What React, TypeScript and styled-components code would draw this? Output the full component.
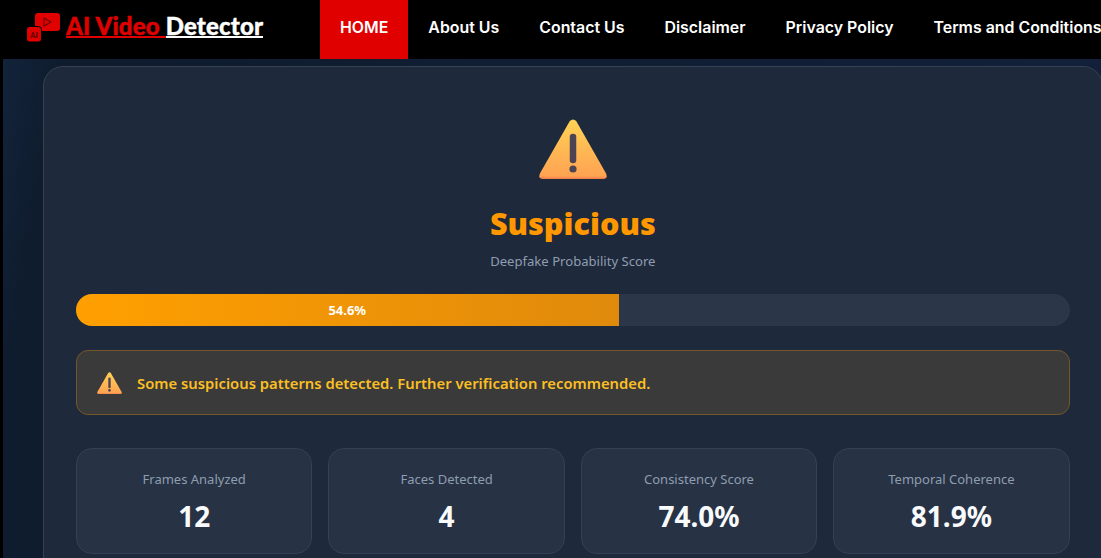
import React from "react";
import styled, { createGlobalStyle } from "styled-components";

const Global = createGlobalStyle`
  html, body { margin: 0; padding: 0; height: 558px; overflow: hidden; background: #000; }
  * { box-sizing: border-box; }
  #root { height: 558px; overflow: hidden; }
`;
const bodyFont = `"Noto Sans", "Open Sans", sans-serif`;

const Header = styled.header`
  display: flex; height: 59px; background: #000; align-items: stretch; overflow: hidden;
`;
const Brand = styled.div`
  flex: none; width: 320px; display: flex; align-items: flex-start; padding: 13px 0 0 27px; gap: 6px;
`;
const BrandText = styled.div`
  display: flex; font-family: Lato, sans-serif; font-weight: 900; font-size: 24px; line-height: 20px;
  letter-spacing: 0.17px; white-space: pre; margin-top: 3px;
`;
const BrandPart = styled.span<{ $c: string }>`
  color: ${p => p.$c}; border-bottom: 2px solid ${p => p.$c}; -webkit-text-stroke: 0.4px ${p => p.$c};
`;
const Nav = styled.nav`display: flex; flex: none; white-space: nowrap;`;
const NavItem = styled.a<{ $active?: boolean }>`
  display: flex; align-items: center; padding: 0 20px 4px; height: 59px;
  color: #fff; font-family: Inter, sans-serif; font-weight: 600; font-size: 15.9px;
  background: ${p => (p.$active ? "#e00000" : "transparent")};
`;
const Page = styled.main`
  margin-left: 3px; height: 499px; padding: 7px 0 0 40px; overflow: hidden;
  background: linear-gradient(100deg, #12233a 0%, #0f1c2e 5%, #12203a 100%);
`;
const Card = styled.section`
  width: 1059.6px; height: 600px; padding: 32px; border: 1px solid #364254; border-radius: 20px;
  background: #1e293b; font-family: ${bodyFont};
`;
const Top = styled.div`display: flex; flex-direction: column; align-items: center; padding-top: 20px;`;
const Title = styled.h1`
  margin: 24px 0 0; font-family: ${bodyFont}; font-weight: 900; font-size: 30.6px; line-height: 40px; color: #ff9800;
`;
const Sub = styled.p`margin: 9px 0 0; font-size: 13.1px; line-height: 18px; color: #8f9db0;`;
const Track = styled.div`
  margin-top: 24px; height: 32px; border-radius: 16px; overflow: hidden; background: #2b3748;
`;
const Fill = styled.div`
  height: 100%; display: flex; align-items: center; justify-content: center;
  background: linear-gradient(90deg, #ff9f00, #e08a0c);
  color: #fff; font-weight: 700; font-size: 13px;
`;
const Alert = styled.div`
  margin-top: 24px; height: 65px; display: flex; align-items: center; gap: 15px; padding: 1px 20px 0;
  border: 1px solid #75562a; border-radius: 12px; background: #3a3a3a;
  color: #fbbf24; font-weight: 600; font-size: 14.8px;
`;
const Stats = styled.div`margin-top: 33px; display: grid; grid-template-columns: repeat(4, 1fr); gap: 16px;`;
const Stat = styled.div`
  height: 106px; display: flex; flex-direction: column; align-items: center; padding-top: 21px;
  background: #273244; border: 1px solid #344154; border-radius: 16px;
`;
const StatLabel = styled.div`font-size: 13px; line-height: 18px; color: #8f9db0;`;
const StatValue = styled.div`margin-top: 9px; font-size: 28px; font-weight: 700; line-height: 38px; color: #f8fafc;`;

const Warn = ({ w, h, id }: { w: number; h: number; id: string }) => (
  <svg width={w} height={h} viewBox="0 0 68 60" aria-hidden style={{ flex: "none" }}>
    <defs>
      <linearGradient id={id} x1="0" y1="0" x2="0" y2="1">
        <stop offset="0" stopColor="#ffd255" />
        <stop offset="0.95" stopColor="#ffa352" />
        <stop offset="1" stopColor="#f07a4a" />
      </linearGradient>
    </defs>
    <path d="M30.8 2 Q34 -1 37.2 2 L66.8 54 Q69.5 60 64 60 L4 60 Q-1.5 60 1.2 54Z" fill={`url(#${id})`} />
    <path d="M34 18v23" stroke="#4d4453" strokeWidth="6.5" strokeLinecap="round" />
    <circle cx="34" cy="50" r="3.6" fill="#4d4453" />
  </svg>
);

const Logo = () => (
  <svg width="33" height="29" viewBox="0 0 33 29" aria-hidden style={{ flex: "none" }}>
    <rect x="8" y="0" width="25" height="18" rx="3" fill="#e00000" />
    <path d="M17 5 L24 9 L17 13Z" fill="none" stroke="#6b0000" strokeWidth="1.1" />
    <rect x="-0.5" y="13.5" width="15" height="15.5" rx="3" fill="#e00000" stroke="#000" strokeWidth="1" />
    <text x="7" y="24.5" textAnchor="middle" fontFamily="Lato, sans-serif" fontWeight="900" fontSize="7.5" fill="#5a0000">AI</text>
  </svg>
);

const stats = [
  ["Frames Analyzed", "12"],
  ["Faces Detected", "4"],
  ["Consistency Score", "74.0%"],
  ["Temporal Coherence", "81.9%"],
];
const nav = ["HOME", "About Us", "Contact Us", "Disclaimer", "Privacy Policy", "Terms and Conditions"];

export default function App() {
  return (
    <>
      <Global />
      <Header>
        <Brand>
          <Logo />
          <BrandText>
            <BrandPart $c="#e00000">AI Video </BrandPart>
            <BrandPart $c="#fff">Detector</BrandPart>
          </BrandText>
        </Brand>
        <Nav>
          {nav.map((n, i) => (
            <NavItem key={n} $active={i === 0}>{n}</NavItem>
          ))}
        </Nav>
      </Header>
      <Page>
        <Card>
          <Top>
            <Warn w={68} h={60} id="big" />
            <Title>Suspicious</Title>
            <Sub>Deepfake Probability Score</Sub>
          </Top>
          <Track>
            <Fill style={{ width: "54.6%" }}>54.6%</Fill>
          </Track>
          <Alert>
            <Warn w={25} h={22} id="small" />
            Some suspicious patterns detected. Further verification recommended.
          </Alert>
          <Stats>
            {stats.map(([l, v]) => (
              <Stat key={l}>
                <StatLabel>{l}</StatLabel>
                <StatValue>{v}</StatValue>
              </Stat>
            ))}
          </Stats>
        </Card>
      </Page>
    </>
  );
}
